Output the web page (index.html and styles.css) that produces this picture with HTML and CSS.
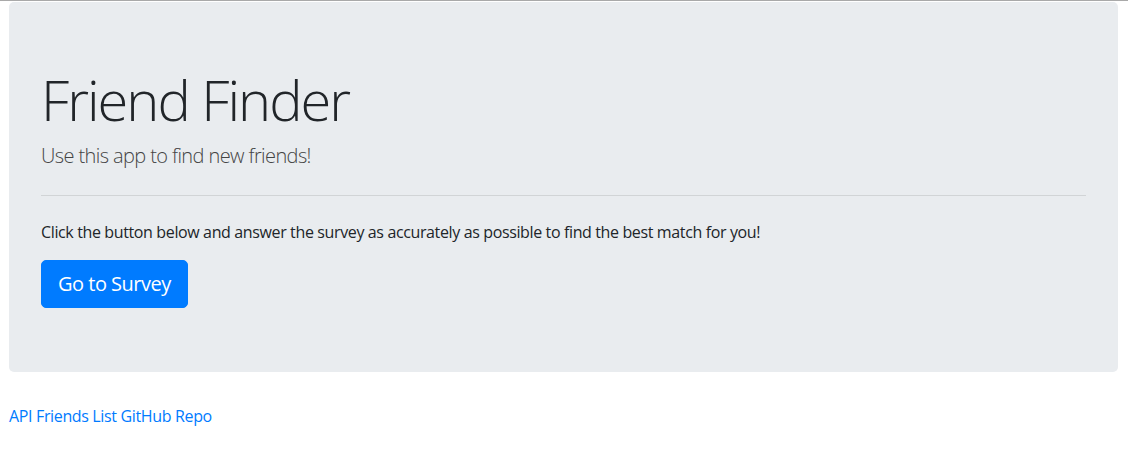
FILE: index.html
```html
<!DOCTYPE html>
<html lang="en">
<head>
<meta charset="utf-8">
<title>Friend Finder</title>
<link rel="stylesheet" href="styles.css">
</head>
<body>
<div class="page">
  <div class="jumbotron">
    <h1 class="display">Friend Finder</h1>
    <p class="lead">Use this app to find new friends!</p>
    <hr class="divider">
    <p class="intro">Click the button below and answer the survey as accurately as possible to find the best match for you!</p>
    <a class="btn" href="#">Go to Survey</a>
  </div>
  <a class="repo-link" href="#">API Friends List GitHub Repo</a>
</div>
</body>
</html>
```
FILE: styles.css
```css
* { box-sizing: border-box; }
html, body { margin: 0; padding: 0; }
body {
  font-family: "Open Sans", "Noto Sans", sans-serif;
  font-size: 16px;
  line-height: 1.5;
  letter-spacing: -0.37px;
  color: #212529;
  background: #fff;
  border-top: 1px solid #a9a9a9;
}
.page {
  padding: 1px 10px 0 9px;
}
.jumbotron {
  background: #e9ecef;
  border-radius: 5px;
  padding: 64px 32px;
  margin-bottom: 32px;
}
.display {
  margin: 0 0 8px;
  font-size: 56px;
  font-weight: 300;
  line-height: 1.2;
  letter-spacing: -2px;
}
.lead {
  margin: 0;
  font-size: 20px;
  font-weight: 300;
  letter-spacing: -0.6px;
  color: #444;
}
.divider {
  margin: 24px 0;
  border: 0;
  border-top: 1px solid rgba(0,0,0,0.1);
}
.intro {
  margin: 0 0 16px;
}
.btn {
  display: inline-block;
  background: #007bff;
  color: #fff;
  text-decoration: none;
  font-size: 20px;
  line-height: 1.5;
  letter-spacing: -0.5px;
  padding: 8px 16px;
  border: 1px solid #007bff;
  border-radius: 5px;
}
.repo-link {
  color: #007bff;
  text-decoration: none;
  letter-spacing: -0.35px;
}
```
